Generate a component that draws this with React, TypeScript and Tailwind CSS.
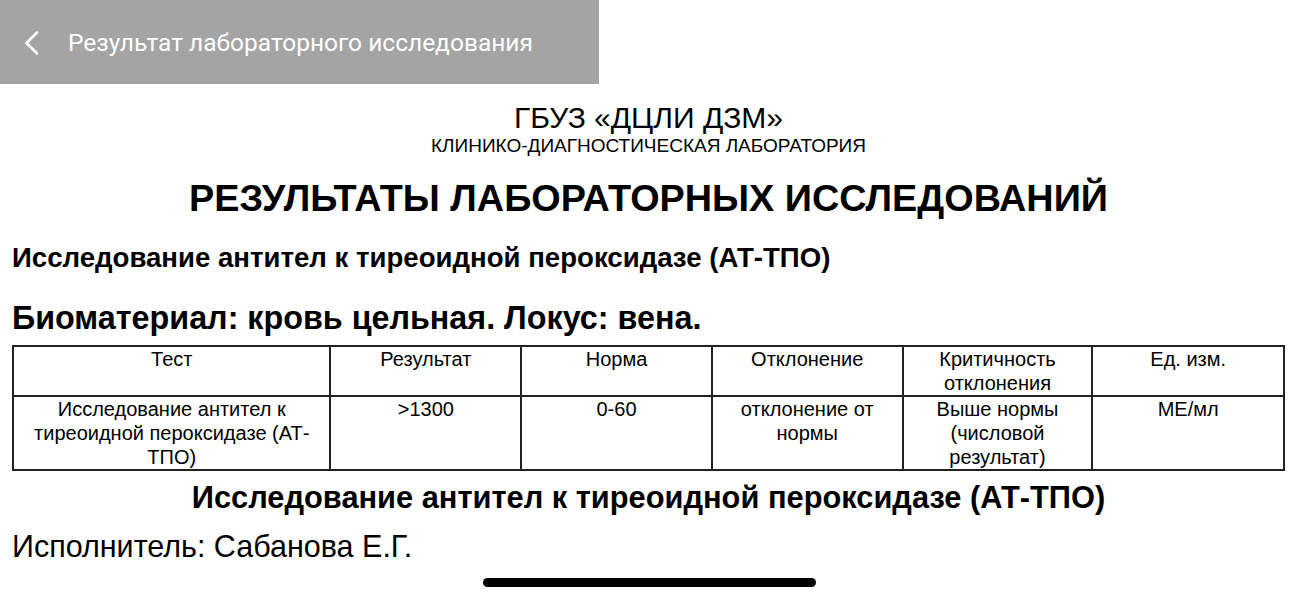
const head = ["Тест", "Результат", "Норма", "Отклонение", "Критичность отклонения", "Ед. изм."];
const row = [
  "Исследование антител к тиреоидной пероксидазе (АТ-ТПО)",
  ">1300",
  "0-60",
  "отклонение от нормы",
  "Выше нормы (числовой результат)",
  "МЕ/мл",
];
const widths = ["w-[318px]", "w-[191px]", "w-[191px]", "w-[191px]", "w-[190px]", "w-[192px]"];

export default function App() {
  return (
    <div className="relative h-[600px] w-[1297px] overflow-hidden bg-white font-['Liberation_Sans',Arial,sans-serif] text-black">
      <header className="flex h-[84px] w-[599px] items-center bg-[#a4a4a4] font-['Roboto',sans-serif] text-white">
        <svg className="ml-[23px] mt-[1px] h-[24px] w-[16px]" viewBox="0 0 16 24" fill="none">
          <path d="M14 1.5 L3.5 12 L14 22.5" stroke="white" strokeWidth="2.6" strokeLinecap="round" strokeLinejoin="round" />
        </svg>
        <span className="ml-[29px] mt-[2px] text-[24.5px] leading-none">Результат лабораторного исследования</span>
      </header>

      <main className="px-[12px]">
        <div className="mt-[18px] text-center text-[30px] leading-[32px]">ГБУЗ «ДЦЛИ ДЗМ»</div>
        <div className="mt-[1px] text-center text-[19px] leading-[22px]">КЛИНИКО-ДИАГНОСТИЧЕСКАЯ ЛАБОРАТОРИЯ</div>
        <h1 className="mt-[19px] text-center text-[37.8px] font-bold leading-[44px]">
          РЕЗУЛЬТАТЫ ЛАБОРАТОРНЫХ ИССЛЕДОВАНИЙ
        </h1>
        <h2 className="mt-[22px] text-[27.6px] font-bold leading-[32px]">
          Исследование антител к тиреоидной пероксидазе (АТ-ТПО)
        </h2>
        <h3 className="mt-[26px] text-[32.3px] font-bold leading-[36px]">
          Биоматериал: кровь цельная. Локус: вена.
        </h3>

        <table className="mt-[9px] w-[1273px] border-collapse text-[20px] leading-[24px]">
          <thead>
            <tr>
              {head.map((h, i) => (
                <th key={h} className={`${widths[i]} border-2 border-[#222] px-[4px] align-top font-normal`}>
                  {h}
                </th>
              ))}
            </tr>
          </thead>
          <tbody>
            <tr>
              {row.map((c, i) => (
                <td key={i} className={`${widths[i]} border-2 border-[#222] px-[4px] text-center align-top`}>
                  {c}
                </td>
              ))}
            </tr>
          </tbody>
        </table>

        <div className="mt-[9px] text-center text-[30.8px] font-bold leading-[36px]">
          Исследование антител к тиреоидной пероксидазе (АТ-ТПО)
        </div>
        <div className="mt-[13px] text-[30.5px] leading-[34px]">Исполнитель: Сабанова Е.Г.</div>
      </main>

      <div className="absolute left-[483px] top-[578px] h-[9px] w-[333px] rounded-full bg-black" />
    </div>
  );
}
